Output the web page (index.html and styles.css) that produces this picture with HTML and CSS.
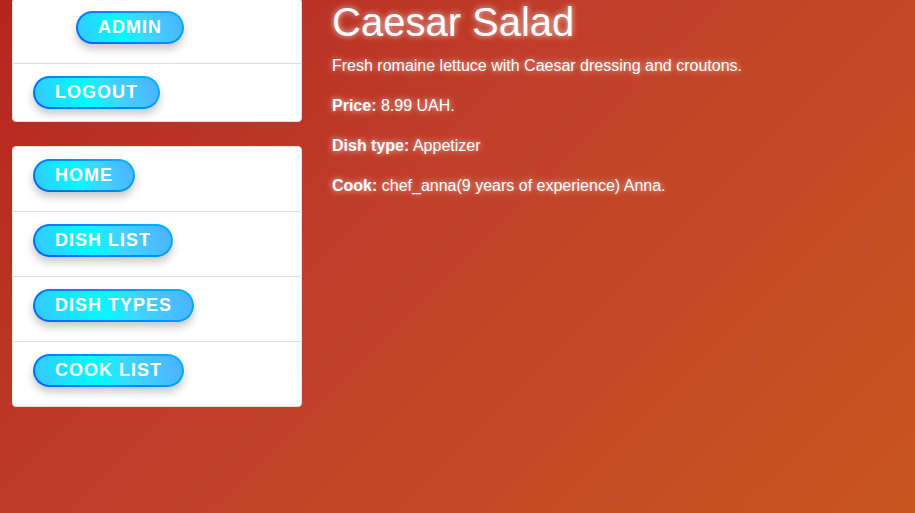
FILE: index.html
```html
<!DOCTYPE html>
<html lang="en">
<head>
<meta charset="utf-8">
<title>Caesar Salad</title>
<link rel="stylesheet" href="styles.css">
</head>
<body>
<div class="layout">
  <aside class="sidebar">
    <ul class="card">
      <li class="item"><a class="pill pill-admin" href="#">Admin</a></li>
      <li class="item item-short"><a class="pill" href="#">Logout</a></li>
    </ul>
    <ul class="card">
      <li class="item"><a class="pill" href="#">Home</a></li>
      <li class="item"><a class="pill" href="#">Dish list</a></li>
      <li class="item"><a class="pill" href="#">Dish types</a></li>
      <li class="item"><a class="pill" href="#">Cook list</a></li>
    </ul>
  </aside>
  <main class="content">
    <h1 class="title">Caesar Salad</h1>
    <p>Fresh romaine lettuce with Caesar dressing and croutons.</p>
    <p><strong>Price:</strong> 8.99 UAH.</p>
    <p><strong>Dish type:</strong> Appetizer</p>
    <p><strong>Cook:</strong> chef_anna(9 years of experience) Anna.</p>
  </main>
</div>
</body>
</html>
```

FILE: styles.css
```css
html, body {
  margin: 0;
  padding: 0;
}
body {
  min-height: 100vh;
  background: linear-gradient(135deg, #b5251f 0%, #c0402a 45%, #c9561f 100%);
  background-attachment: fixed;
  font-family: "Liberation Sans", Arial, sans-serif;
  color: #fff;
}
.layout {
  display: flex;
  gap: 30px;
  padding: 0 12px;
  margin-top: -2px;
}
.sidebar {
  width: 290px;
  flex: 0 0 290px;
  display: flex;
  flex-direction: column;
  gap: 24px;
}
.card {
  list-style: none;
  margin: 0;
  padding: 0;
  background: #fff;
  border: 1px solid #e2e2e2;
  border-radius: 4px;
}
.item {
  padding: 12px 20px 19px;
  border-bottom: 1px solid #dedede;
  display: flex;
}
.item:last-child {
  border-bottom: none;
}
.item-short {
  padding-bottom: 12px;
}
.pill {
  display: inline-block;
  height: 33px;
  box-sizing: border-box;
  padding: 0 20px;
  line-height: 29px;
  border: 2px solid transparent;
  border-radius: 17px;
  background:
    linear-gradient(70deg, #38c6ff 0%, #00fbff 42%, #3fd6ff 62%, #4db0ff 100%) padding-box,
    linear-gradient(30deg, #0060ff 0%, #0088ff 50%, #00b8ff 100%) border-box;
  box-shadow: 0 5px 9px rgba(0, 0, 0, 0.22);
  color: #fff;
  font-family: "Liberation Sans", Arial, sans-serif;
  font-weight: bold;
  font-size: 18px;
  letter-spacing: 1px;
  text-transform: uppercase;
  text-decoration: none;
}
.pill-admin {
  margin-left: 43px;
}
.content {
  flex: 1;
  text-shadow: 0 0 6px rgba(255, 255, 255, 0.75);
}
.title {
  margin: 0 0 8px;
  font-size: 40px;
  font-weight: normal;
  line-height: 48px;
}
.content p {
  margin: 0 0 16px;
  font-size: 16px;
  line-height: 24px;
}
.content strong {
  font-weight: bold;
}
```
